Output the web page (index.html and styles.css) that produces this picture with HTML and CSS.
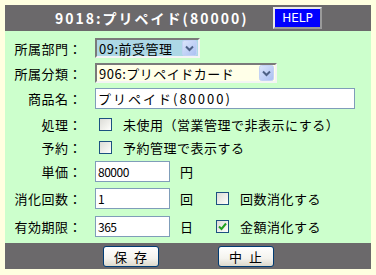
FILE: index.html
```html
<!DOCTYPE html>
<html lang="ja">
<head>
<meta charset="utf-8">
<link rel="stylesheet" href="styles.css">
</head>
<body>
<div class="panel">
  <div class="head">
    <span class="title">9018:プリペイド(80000)</span>
    <span class="help">HELP</span>
  </div>
  <div class="form">
    <div class="lbl">所属部門：</div>
    <div class="fld">
      <div class="sel sel-dept"><span class="sel-text">09:前受管理</span>
        <svg class="arrow" width="15" height="16" viewBox="0 0 15 16"><defs><linearGradient id="ag" x1="0" y1="0" x2="1" y2="1"><stop offset="0" stop-color="#dce6fb"/><stop offset="1" stop-color="#a9bff2"/></linearGradient></defs><rect x="0.5" y="0.5" width="14" height="15" rx="2" fill="url(#ag)" stroke="#c3d2f5"/><path d="M4 6.5 L7.5 10 L11 6.5" fill="none" stroke="#4d6185" stroke-width="2"/></svg>
      </div>
    </div>

    <div class="lbl">所属分類：</div>
    <div class="fld">
      <div class="sel sel-cat"><span class="sel-text">906:プリペイドカード</span>
        <svg class="arrow" width="15" height="16" viewBox="0 0 15 16"><rect x="0.5" y="0.5" width="14" height="15" rx="2" fill="url(#ag)" stroke="#c3d2f5"/><path d="M4 6.5 L7.5 10 L11 6.5" fill="none" stroke="#4d6185" stroke-width="2"/></svg>
      </div>
    </div>

    <div class="lbl">商品名：</div>
    <div class="fld"><input class="txt txt-wide" type="text" value="プリペイド(80000)"></div>

    <div class="lbl">処理：</div>
    <div class="fld"><span class="cb"></span><span class="cb-text">未使用（営業管理で非表示にする）</span></div>

    <div class="lbl">予約：</div>
    <div class="fld"><span class="cb"></span><span class="cb-text">予約管理で表示する</span></div>

    <div class="lbl">単価：</div>
    <div class="fld"><input class="txt txt-num" type="text" value="80000"><span class="unit">円</span></div>

    <div class="lbl">消化回数：</div>
    <div class="fld"><input class="txt txt-num" type="text" value="1"><span class="unit">回</span><span class="cb cb-after"></span><span class="cb-text">回数消化する</span></div>

    <div class="lbl">有効期限：</div>
    <div class="fld"><input class="txt txt-num" type="text" value="365"><span class="unit">日</span><span class="cb cb-after cb-on"><svg width="9" height="9" viewBox="0 0 9 9"><path d="M1 4.5 L3.5 7 L8 1.5" fill="none" stroke="#21a121" stroke-width="2"/></svg></span><span class="cb-text">金額消化する</span></div>
  </div>
  <div class="foot">
    <button class="btn" type="button">保 存</button>
    <button class="btn" type="button">中 止</button>
  </div>
</div>
</body>
</html>
```
FILE: styles.css
```css
* { box-sizing: border-box; }
html, body { margin: 0; padding: 0; }
body {
  background: #ffffe0;
  font-family: "Noto Sans CJK JP", "DejaVu Sans", sans-serif;
  font-size: 13px;
  color: #000;
  padding: 5px;
}
.panel {
  width: 366px;
}
.head {
  height: 26px;
  background: #6b696b;
  display: flex;
  align-items: center;
  padding-left: 50px;
}
.title {
  color: #fff;
  font-weight: bold;
  font-size: 14px;
  letter-spacing: 2px;
  line-height: 1;
}
.help {
  margin-left: auto;
  margin-right: 49px;
  width: 49px;
  height: 22px;
  background: #0000ff;
  border: 2px solid;
  border-color: #e8e8e8 #9a9a9a #9a9a9a #e8e8e8;
  color: #fff;
  font-family: "DejaVu Sans", sans-serif;
  font-size: 12px;
  display: flex;
  align-items: center;
  justify-content: center;
}
.form {
  background: #ccffcc;
  padding: 5px 0 2px 0;
  display: grid;
  grid-template-columns: 77px 1fr;
  column-gap: 13px;
  grid-template-rows: 24px 26px 25px 26px 20px 28px 26px 30px;
}
.lbl {
  text-align: right;
  display: flex;
  align-items: center;
  justify-content: flex-end;
  letter-spacing: 0.5px;
}
.fld {
  display: flex;
  align-items: center;
}
.sel {
  height: 20px;
  display: flex;
  align-items: center;
  border: 2px solid;
  border-color: #7a7a7a #f4f4f4 #f4f4f4 #7a7a7a;
  padding-left: 2px;
  padding-right: 1px;
}
.sel-text { flex: 1; white-space: nowrap; letter-spacing: 0.5px; }
.sel-dept { width: 105px; background: #add8e6; }
.sel-cat { width: 182px; background: #ffffe8; }
.arrow { display: block; flex: none; }
.txt {
  height: 21px;
  border: 1px solid #7f9db9;
  background: #fff;
  font-family: "Noto Sans CJK JP", "DejaVu Sans", sans-serif;
  font-size: 13px;
  padding: 0 2px;
  margin: 0;
  outline: none;
}
.txt-wide { width: 260px; letter-spacing: 2px; }
.txt-num { width: 75px; font-size: 12px; letter-spacing: -0.5px; }
.unit { margin-left: 10px; }
.cb {
  width: 13px;
  height: 13px;
  border: 1px solid #1c5180;
  background: linear-gradient(135deg, #dcdcd7 0%, #f4f4f0 70%, #ffffff 100%);
  margin-left: 4px;
  display: flex;
  align-items: center;
  justify-content: center;
  flex: none;
}
.cb-after { margin-left: 23px; }
.cb-on svg { display: block; }
.cb-text { margin-left: 11px; white-space: nowrap; letter-spacing: 0.5px; }
.foot {
  height: 26px;
  background: #6b696b;
  display: flex;
  align-items: center;
  justify-content: center;
  gap: 59px;
}
.btn {
  width: 56px;
  height: 21px;
  border: 1px solid #003c74;
  border-radius: 3px;
  background: linear-gradient(#ffffff 0%, #f4f3ee 60%, #dcd9cc 100%);
  font-family: "Noto Sans CJK JP", "DejaVu Sans", sans-serif;
  font-size: 13px;
  letter-spacing: 2px;
  text-indent: 2px;
  line-height: 1;
  padding: 0;
  color: #000;
}
```
